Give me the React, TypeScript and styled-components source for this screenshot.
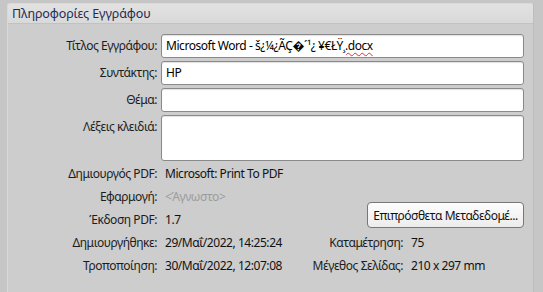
import styled, { createGlobalStyle } from "styled-components";

const GlobalStyle = createGlobalStyle`
  html, body {
    margin: 0;
    padding: 0;
    background: #c6c6c6;
    font-family: "Noto Sans", "Open Sans", sans-serif;
    font-size: 12px;
    letter-spacing: -0.45px;
    color: #1c1c1c;
  }
`;

const Panel = styled.section`
  margin: 3px 0 0 7px;
  width: 527px;
  height: 300px;
  background: #cdcdcd;
  border: 1px solid #d9d9d9;
  border-bottom: none;
  border-right-color: #bdbdbd;
  border-radius: 3px 3px 0 0;
  box-sizing: border-box;
`;

const Header = styled.header`
  height: 19px;
  padding-left: 4px;
  display: flex;
  align-items: center;
  background: linear-gradient(#e2e2e2, #d9d9d9);
  border-bottom: 1px solid #c2c2c2;
  border-radius: 2px 2px 0 0;
  color: #1d2b55;
  font-size: 12.5px;
  letter-spacing: -0.1px;
`;

const Body = styled.div`
  padding: 10px 9px 0 0;
`;

const FieldGrid = styled.div`
  display: grid;
  grid-template-columns: 149px 1fr;
  column-gap: 4px;
  row-gap: 3px;
`;

const FieldLabel = styled.label`
  text-align: right;
  line-height: 24px;
  white-space: nowrap;
`;

const TextBox = styled.div<{ tall?: boolean }>`
  height: ${({ tall }) => (tall ? 46 : 24)}px;
  box-sizing: border-box;
  padding: 0 4px;
  line-height: 22px;
  background: #ffffff;
  border: 1px solid #8a8a8a;
  border-radius: 3px;
  box-shadow: inset 0 1px 1px rgba(0, 0, 0, 0.12);
  color: #000;
  white-space: nowrap;
  overflow: hidden;
`;

const Misspelled = styled.span`
  text-decoration: underline wavy #e03030;
  text-decoration-thickness: 1px;
  text-underline-offset: 2px;
`;

const InfoGrid = styled.div`
  margin-top: 1px;
  display: grid;
  grid-template-columns: 149px 1fr auto 114px;
  grid-auto-rows: 23px;
  column-gap: 7px;
  align-items: center;
`;

const InfoLabel = styled.span`
  text-align: right;
  white-space: nowrap;
`;

const InfoValue = styled.span<{ muted?: boolean; wide?: boolean }>`
  padding-left: 1px;
  white-space: nowrap;
  color: ${({ muted }) => (muted ? "#9c9c9c" : "#111")};
  grid-column: ${({ wide }) => (wide ? "2 / 5" : "auto")};
`;

const MetaButton = styled.button`
  grid-column: 3 / 5;
  grid-row: 2 / 4;
  justify-self: end;
  align-self: end;
  margin-bottom: 3px;
  height: 26px;
  width: 157px;
  padding: 0 4px;
  font: inherit;
  letter-spacing: inherit;
  color: #111;
  white-space: nowrap;
  background: linear-gradient(#fdfdfd, #ececec);
  border: 1px solid #777;
  border-radius: 4px;
`;

export default function App() {
  return (
    <>
      <GlobalStyle />
      <Panel>
        <Header>Πληροφορίες Εγγράφου</Header>
        <Body>
          <FieldGrid>
            <FieldLabel>Τίτλος Εγγράφου:</FieldLabel>
            <TextBox>
              Microsoft Word - š¿¼¿ÃÇ�´¹¿ ¥€ŁŸ<Misspelled>¸.docx</Misspelled>
            </TextBox>
            <FieldLabel>Συντάκτης:</FieldLabel>
            <TextBox>HP</TextBox>
            <FieldLabel>Θέμα:</FieldLabel>
            <TextBox />
            <FieldLabel>Λέξεις κλειδιά:</FieldLabel>
            <TextBox tall />
          </FieldGrid>
          <InfoGrid>
            <InfoLabel>Δημιουργός PDF:</InfoLabel>
            <InfoValue wide>Microsoft: Print To PDF</InfoValue>
            <InfoLabel>Εφαρμογή:</InfoLabel>
            <InfoValue muted>&lt;Άγνωστο&gt;</InfoValue>
            <MetaButton>Επιπρόσθετα Μεταδεδομέ...</MetaButton>
            <InfoLabel>Έκδοση PDF:</InfoLabel>
            <InfoValue>1.7</InfoValue>
            <InfoLabel>Δημιουργήθηκε:</InfoLabel>
            <InfoValue>29/Μαΐ/2022, 14:25:24</InfoValue>
            <InfoLabel>Καταμέτρηση:</InfoLabel>
            <InfoValue>75</InfoValue>
            <InfoLabel>Τροποποίηση:</InfoLabel>
            <InfoValue>30/Μαΐ/2022, 12:07:08</InfoValue>
            <InfoLabel>Μέγεθος Σελίδας:</InfoLabel>
            <InfoValue>210 x 297 mm</InfoValue>
          </InfoGrid>
        </Body>
      </Panel>
    </>
  );
}
